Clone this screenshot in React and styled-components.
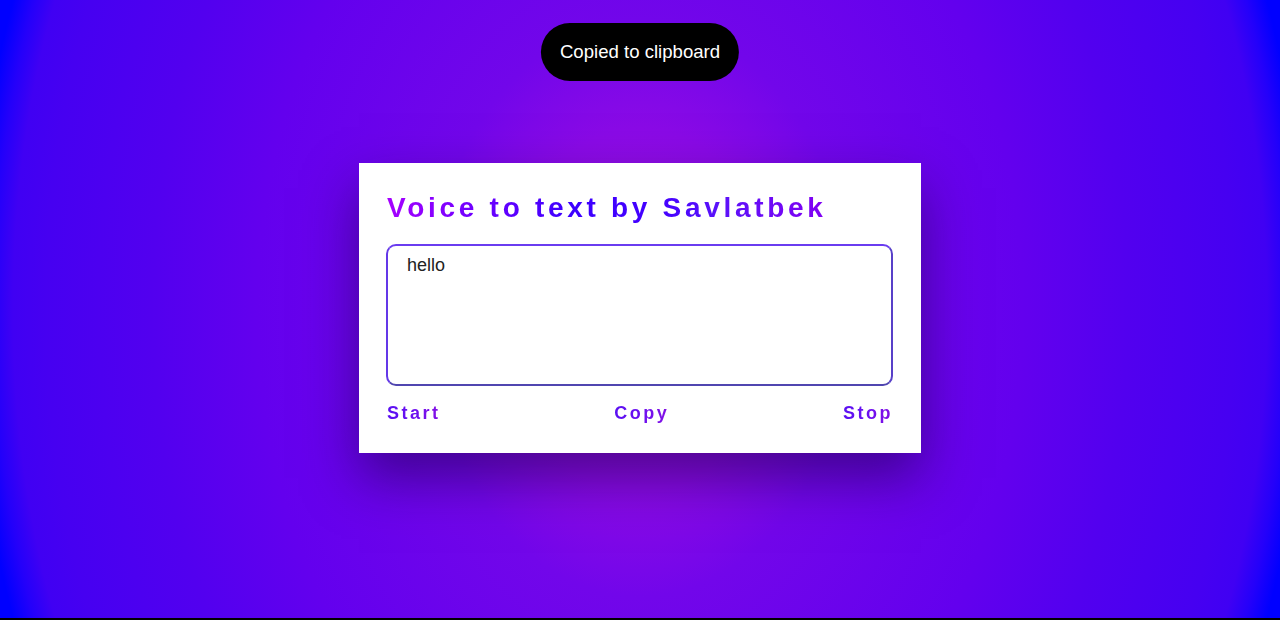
import React from "react";
import styled, { createGlobalStyle } from "styled-components";

const Global = createGlobalStyle`
  html, body { margin: 0; padding: 0; background: #000; }
  body { font-family: "Liberation Sans", Arial, sans-serif; }
  * { box-sizing: border-box; }
`;

const Page = styled.main`
  height: 618px;
  padding-bottom: 2px;
  display: flex;
  align-items: center;
  justify-content: center;
  background: radial-gradient(
    ellipse 660px 900px at 50% 50%,
    #a010e4 0%,
    #8a0ae6 20%,
    #7206ea 32%,
    #6300ee 58%,
    #5200ef 74%,
    #4600f1 90%,
    #4000f3 95%,
    #2400fa 98%,
    #0000ff 101%
  );
`;

const Toast = styled.div`
  position: fixed;
  top: 23px;
  left: 50%;
  transform: translateX(-50%);
  height: 58px;
  padding: 0 19px;
  border-radius: 29px;
  background: #000;
  color: #fff;
  font-size: 18.6px;
  display: flex;
  align-items: center;
  white-space: nowrap;
`;

const Card = styled.section`
  width: 562px;
  height: 290px;
  background: #fff;
  padding: 29px 28px 0 27px;
  box-shadow: 0 25px 50px rgba(20, 0, 60, 0.5);
  display: flex;
  flex-direction: column;
`;

const Title = styled.h1`
  margin: 0 0 20px 1px;
  font-size: 28px;
  font-weight: 700;
  letter-spacing: 3.7px;
  line-height: 32px;
  width: max-content;
  background: linear-gradient(90deg, #a600ff 0%, #7400ff 18%, #3c00ff 42%, #4400ff 62%, #5a12fa 75%, #8200f2 100%);
  -webkit-background-clip: text;
  background-clip: text;
  color: transparent;
`;

const TextBox = styled.textarea`
  width: 507px;
  height: 142px;
  border: 2px solid;
  border-color: #6a3cf0 #5840c8 #5046b0 #6438e8;
  border-radius: 10px;
  padding: 9px 19px 8px;
  font-family: "Liberation Sans", Arial, sans-serif;
  font-size: 18px;
  color: #222;
  resize: none;
  outline: none;
  background: #fff;
`;

const Actions = styled.div`
  width: 507px;
  margin-top: 17px;
  padding-left: 1px;
  display: flex;
  justify-content: space-between;
`;

const ActionButton = styled.button`
  border: none;
  padding: 0;
  margin: 0;
  background: linear-gradient(90deg, #5a10f2 0%, #6c0ff0 50%, #8410e4 100%);
  -webkit-background-clip: text;
  background-clip: text;
  color: transparent;
  font-family: "Liberation Sans", Arial, sans-serif;
  font-size: 18px;
  font-weight: 700;
  letter-spacing: 2.5px;
  line-height: 21px;
  cursor: pointer;
`;

export default function App() {
  return (
    <>
      <Global />
      <Page>
        <Toast>Copied to clipboard</Toast>
        <Card>
          <Title>Voice to text by Savlatbek</Title>
          <TextBox defaultValue="hello" />
          <Actions>
            <ActionButton>Start</ActionButton>
            <ActionButton>Copy</ActionButton>
            <ActionButton>Stop</ActionButton>
          </Actions>
        </Card>
      </Page>
    </>
  );
}
